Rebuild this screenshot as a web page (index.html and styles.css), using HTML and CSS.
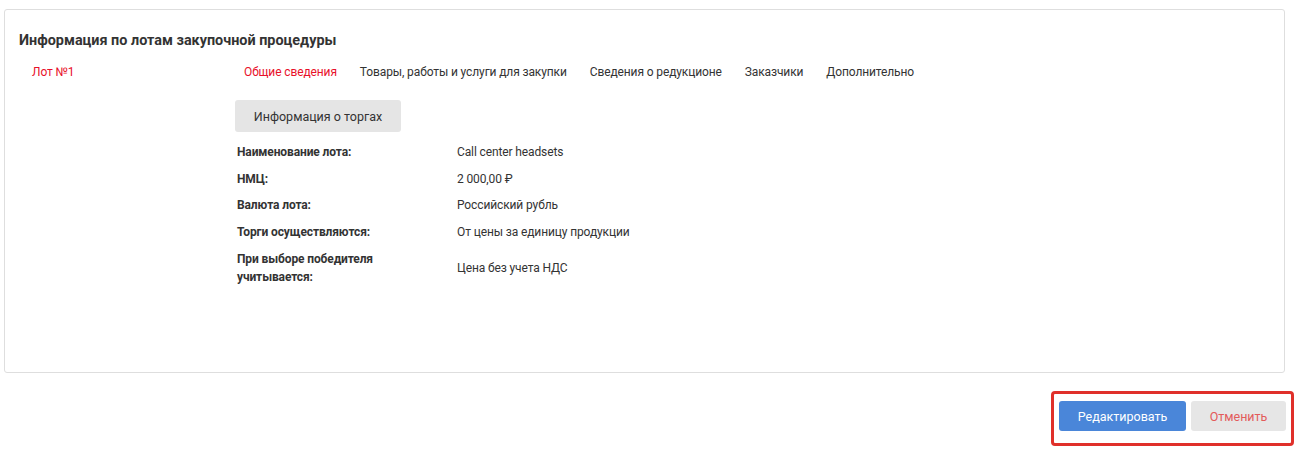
FILE: index.html
```html
<!DOCTYPE html>
<html lang="ru">
<head>
    <meta charset="UTF-8">
    <title>Информация по лотам</title>
    <link rel="stylesheet" href="styles.css">
</head>
<body>
    <div class="card">
        <h2 class="card-title">Информация по лотам закупочной процедуры</h2>
        <div class="lots">
            <div class="lot-list">
                <a class="lot-item active">Лот №1</a>
            </div>
            <div class="lot-body">
                <div class="tabs">
                    <span class="tab active">Общие сведения</span>
                    <span class="tab">Товары, работы и услуги для закупки</span>
                    <span class="tab">Сведения о редукционе</span>
                    <span class="tab">Заказчики</span>
                    <span class="tab">Дополнительно</span>
                </div>
                <button class="section-btn">Информация о торгах</button>
                <div class="info">
                    <div class="info-row">
                        <div class="info-label">Наименование лота:</div>
                        <div class="info-value">Call center headsets</div>
                    </div>
                    <div class="info-row">
                        <div class="info-label">НМЦ:</div>
                        <div class="info-value">2 000,00 ₽</div>
                    </div>
                    <div class="info-row">
                        <div class="info-label">Валюта лота:</div>
                        <div class="info-value">Российский рубль</div>
                    </div>
                    <div class="info-row">
                        <div class="info-label">Торги осуществляются:</div>
                        <div class="info-value">От цены за единицу продукции</div>
                    </div>
                    <div class="info-row tall">
                        <div class="info-label"><span class="wrap">При выборе победителя учитывается:</span></div>
                        <div class="info-value">Цена без учета НДС</div>
                    </div>
                </div>
            </div>
        </div>
    </div>

    <div class="footer">
        <div class="actions">
            <button class="btn btn-primary">Редактировать</button>
            <button class="btn btn-cancel">Отменить</button>
        </div>
    </div>
</body>
</html>
```

FILE: styles.css
```css
body {
    margin: 0;
    font-family: Roboto, 'Liberation Sans', sans-serif;
    font-size: 12px;
    letter-spacing: -0.12px;
    color: #333;
    background-color: #fff;
}
.card {
    margin: 9px 14px 0 4px;
    height: 364px;
    box-sizing: border-box;
    border: 1px solid #dedede;
    border-radius: 3px;
    padding: 21px 14px 0 14px;
}
.card-title {
    margin: 0 0 8px 0;
    font-size: 14.4px;
    line-height: 20px;
    font-weight: bold;
    letter-spacing: 0;
    color: #333;
}
.lots {
    display: flex;
}
.lot-list {
    width: 216px;
    flex-shrink: 0;
}
.lot-item {
    display: block;
    padding: 4px 13px;
    line-height: 18px;
    cursor: pointer;
}
.lot-item.active {
    color: #e8102a;
}
.tabs {
    display: flex;
    gap: 23px;
    padding: 4px 0 0 9px;
    line-height: 18px;
}
.tab {
    color: #333;
    cursor: pointer;
}
.tab.active {
    color: #e8102a;
}
.section-btn {
    display: block;
    margin-top: 19px;
    width: 166px;
    height: 32px;
    border: none;
    border-radius: 3px;
    background-color: #e5e5e5;
    font-family: inherit;
    font-size: 12.5px;
    color: #333;
    cursor: pointer;
}
.info {
    margin-top: 7px;
    padding-left: 2px;
}
.info-row {
    display: flex;
    align-items: center;
    min-height: 26.6px;
    line-height: 18px;
}
.info-row.tall {
    margin-top: 5px;
}
.info-label {
    width: 220px;
    flex-shrink: 0;
    font-weight: bold;
}
.wrap {
    display: block;
    max-width: 140px;
}
.footer {
    display: flex;
    justify-content: flex-end;
    padding: 18px 5px 0 0;
}
.actions {
    display: flex;
    gap: 5px;
    padding: 7px 5px 12px 5px;
    border: 3px solid #e0302a;
    border-radius: 4px;
}
.btn {
    height: 30px;
    border: none;
    border-radius: 3px;
    font-family: inherit;
    font-size: 12.5px;
    cursor: pointer;
}
.btn-primary {
    width: 127px;
    background-color: #4a86d9;
    color: #fff;
}
.btn-cancel {
    width: 95px;
    background-color: #e6e6e6;
    color: #e35b5b;
}
```
